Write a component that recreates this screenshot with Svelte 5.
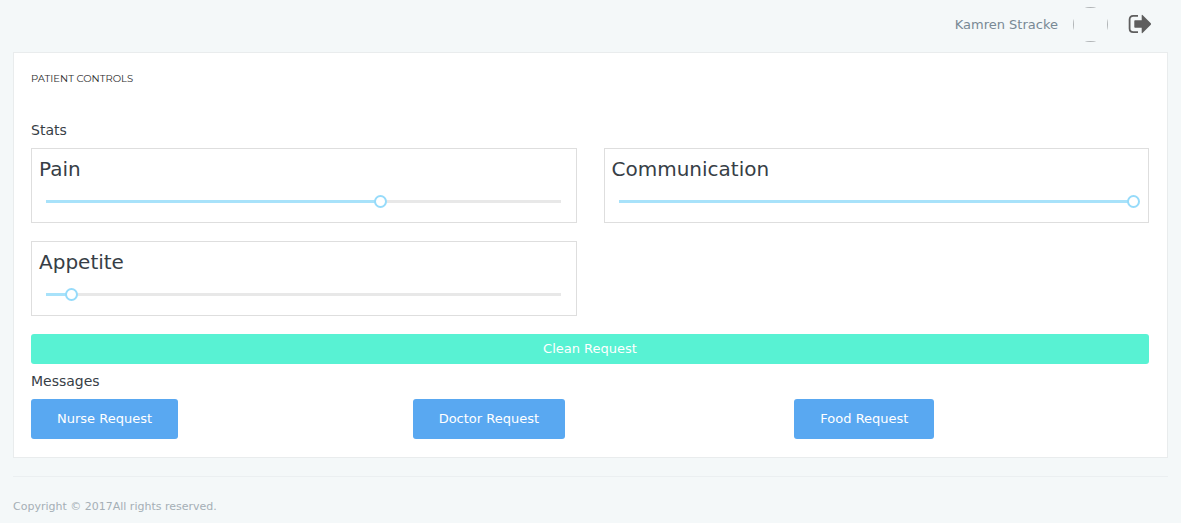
<script>
  let stats = $state([
    { id: 'pain', name: 'Pain', value: 65 },
    { id: 'communication', name: 'Communication', value: 100 },
    { id: 'appetite', name: 'Appetite', value: 5 },
  ]);
  const requests = ['Nurse Request', 'Doctor Request', 'Food Request'];
</script>

<div class="page">
  <header>
    <span class="user">Kamren Stracke</span>
    <span class="avatar"><span class="frame"></span></span>
    <button class="logout" aria-label="Log out">
      <svg width="24" height="20" viewBox="0 0 24 20" aria-hidden="true">
        <path d="M10 1.9H5.2Q1.6 1.9 1.6 5.5v9q0 3.6 3.6 3.6H10" fill="none" stroke="#5e5e5e" stroke-width="1.8" />
        <path d="M6.3 7q0-.8.8-.8h6.6V1.4q0-.9.8-.3l8.3 8.2q.6.7 0 1.4l-8.3 8.2q-.8.6-.8-.3v-4.8H7.1q-.8 0-.8-.8z" fill="#5e5e5e" />
      </svg>
    </button>
  </header>

  <main>
    <h1>PATIENT CONTROLS</h1>
    <h2>Stats</h2>
    <div class="stats">
      {#each stats as stat (stat.id)}
        <div class="stat">
          <label for={stat.id}>{stat.name}</label>
          <input
            id={stat.id}
            type="range"
            min="0"
            max="100"
            bind:value={stat.value}
            style="--fill: {stat.value}%"
          />
        </div>
      {/each}
    </div>
    <button class="clean">Clean Request</button>
    <h2 class="messages">Messages</h2>
    <div class="requests">
      {#each requests as request}
        <div><button>{request}</button></div>
      {/each}
    </div>
  </main>

  <footer>Copyright © 2017All rights reserved.</footer>
</div>

<style>
  :global(body) {
    background: #f4f8f9;
  }
  .page {
    padding: 0 13px;
    font-family: 'DejaVu Sans', sans-serif;
    color: #373e46;
  }
  header {
    display: flex;
    justify-content: flex-end;
    align-items: center;
    height: 48px;
    padding: 0 16px 4px 0;
  }
  .user {
    font-size: 13px;
    line-height: 21px;
    color: #788995;
    margin-right: 15px;
  }
  .avatar {
    width: 35px;
    height: 35px;
    border-radius: 50%;
    overflow: hidden;
    margin-right: 20px;
  }
  .frame {
    display: block;
    box-sizing: border-box;
    height: 100%;
    border: 1px solid #b0b4b6;
  }
  button {
    font: inherit;
    border: 0;
    cursor: pointer;
  }
  .logout {
    display: flex;
    padding: 0;
    background: none;
  }
  main {
    background: #fff;
    border: 1px solid #e9eced;
    padding: 16px 18px 18px 17px;
  }
  h1,
  h2 {
    margin: 0;
    font-weight: 400;
  }
  h1 {
    font-family: Montserrat, Inter, sans-serif;
    font-size: 10px;
    line-height: 20px;
    color: #2c2c2c;
  }
  h2 {
    margin-top: 29px;
    font-size: 14px;
    line-height: 24px;
  }
  .stats {
    display: grid;
    grid-template-columns: 1fr 1fr;
    gap: 18px 27px;
    margin: 6px 0 18px;
  }
  .stat {
    border: 1px solid #dedede;
    padding: 5px 8px 14px 7px;
  }
  label {
    display: block;
    font-size: 20px;
    line-height: 30px;
  }
  input {
    display: block;
    appearance: none;
    width: 100%;
    height: 13px;
    margin: 11px 0 0;
    background: linear-gradient(to right, #a8e2fa var(--fill), #e8e8e8 var(--fill)) center / calc(100% - 14px) 3px no-repeat;
  }
  input::-webkit-slider-thumb {
    appearance: none;
    box-sizing: border-box;
    width: 13px;
    height: 13px;
    border: 2px solid #96dbfa;
    border-radius: 50%;
    background: #fff;
  }
  input::-moz-range-thumb {
    box-sizing: border-box;
    width: 13px;
    height: 13px;
    border: 2px solid #96dbfa;
    border-radius: 50%;
    background: #fff;
  }
  .clean {
    display: block;
    width: 100%;
    padding: 5px 16px;
    border-radius: 3px;
    background: #58f2d3;
    color: #fff;
    font-size: 13px;
    line-height: 20px;
  }
  .messages {
    margin-top: 5px;
  }
  .requests {
    display: grid;
    grid-template-columns: repeat(3, 1fr);
    gap: 27px;
    margin-top: 6px;
  }
  .requests button {
    padding: 10px 26px;
    border-radius: 3px;
    background: #59a8f1;
    color: #fff;
    font-size: 13px;
    line-height: 20px;
  }
  footer {
    margin-top: 18px;
    padding: 20px 0 6px;
    border-top: 1px solid #ebeff1;
    font-size: 11px;
    line-height: 20px;
    color: #a5afb6;
  }
</style>
